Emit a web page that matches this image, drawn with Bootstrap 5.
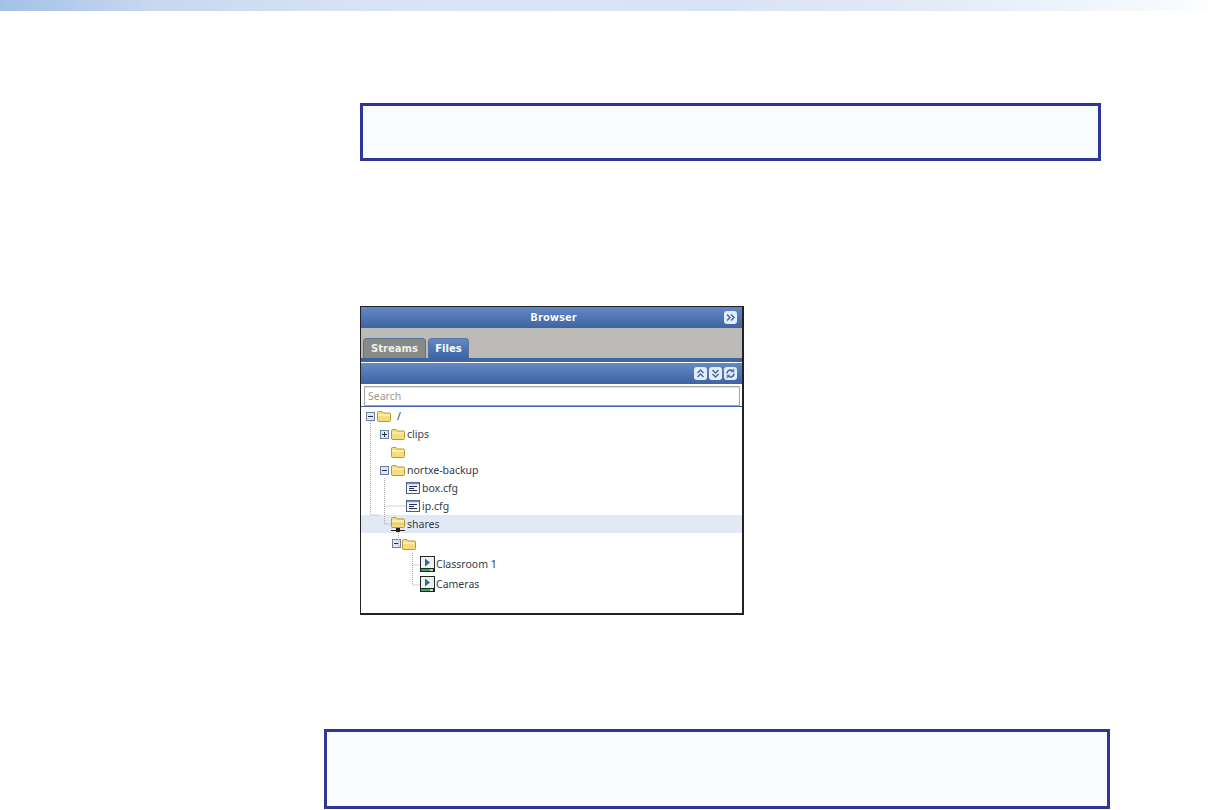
<!DOCTYPE html>
<html lang="en">
<head>
  <meta charset="UTF-8">
  <title>Browser panel</title>
  <meta name="viewport" content="width=device-width, initial-scale=1">
  <link href="https://cdn.jsdelivr.net/npm/bootstrap@5.3.0/dist/css/bootstrap.min.css" rel="stylesheet">
  <style>
    body {
      background: #fff;
      height: 810px;
      overflow: hidden;
      font-family: "Noto Sans", sans-serif;
    }
    .top-strip {
      height: 11px;
      background: linear-gradient(90deg, #a3c1e8 0%, #c6d7ef 12%, #d8e4f5 30%, #dae3f5 60%, #e4ecf8 78%, #f6fafe 95%, #fff 100%);
    }
    .note-box {
      background: #f8fcff;
      border: 3px solid #2e3797;
    }
    .note-one {
      width: 741px;
      height: 58px;
      margin: 92px 0 0 360px;
    }
    .note-two {
      width: 786px;
      height: 80px;
      margin: 114px 0 0 324px;
    }
    .browser-panel {
      position: relative;
      width: 384px;
      height: 309px;
      margin: 145px 0 0 360px;
      border: 1px solid #222;
      border-right-width: 2px;
      border-bottom-width: 2px;
    }
    .panel-head {
      height: 21px;
      background: linear-gradient(#6388c4, #3f64a4);
      color: #fff;
      font: bold 10px/18px "DejaVu Sans", sans-serif;
      padding-right: 5px;
    }
    .panel-title {
      padding-left: 22px;
      text-shadow: 0 0 1px #24457f;
    }
    .tab-strip {
      height: 34px;
      background: #bdbbb8;
      border-bottom: 4px solid #3f64a4;
      padding-left: 2px;
      gap: 2px;
    }
    .tab-item {
      height: 20px;
      border: 1px solid #55749f;
      border-bottom: 0;
      border-radius: 4px 4px 0 0;
      color: #fff;
      font: bold 10px/19px "DejaVu Sans", sans-serif;
      text-align: center;
    }
    .tab-streams {
      width: 63px;
      background: #888a88;
      color: #eef0ee;
    }
    .tab-files {
      width: 41px;
      background: linear-gradient(#6388c4, #3f64a4);
    }
    .tool-bar {
      height: 22px;
      border-top: 1px solid #fff;
      background: linear-gradient(#6388c4, #3f64a4);
      padding-right: 5px;
      gap: 2px;
    }
    .head-btn {
      width: 13px;
      height: 13px;
      border-radius: 3px;
      background: #e3eefa;
      display: block;
    }
    .search-row {
      height: 23px;
      padding: 2px 2px 0 3px;
      border-bottom: 1px solid #3f64a4;
    }
    .search-input {
      width: 100%;
      height: 20px;
      border: 1px solid #a9a9a4;
      box-shadow: inset 0 1px 1px #ddd;
      font: 10.5px/18px "Noto Sans", sans-serif;
      color: #9a9a94;
      padding-left: 3px;
    }
    .tree-list {
      position: relative;
      padding-top: 0;
      font: 10.5px/18px "Noto Sans", sans-serif;
      color: #333c4c;
    }
    .tree-row {
      height: 18px;
      gap: 2px;
    }
    .tree-row svg {
      flex: none;
    }
    .tree-tall {
      height: 20px;
      padding-top: 1px;
      gap: 1px;
    }
    .tree-selected {
      background: #e1e9f5;
    }
    .tree-lines {
      position: absolute;
      left: 0;
      top: 0;
    }
    .indent-0 { padding-left: 5px; }
    .indent-1 { padding-left: 19px; }
    .indent-2 { padding-left: 45px; }
    .indent-folder { padding-left: 30px; }
    .indent-sub { padding-left: 31px; }
    .indent-video { padding-left: 59px; }
  </style>
</head>
<body>

<svg width="0" height="0" class="d-block">
  <defs>
    <symbol id="folder" viewBox="0 0 14 12">
      <path d="M.5 10.5V2.5q0-1 1-1h3.5l1.5 1.5h6q1 0 1 1v6.500q0 1-1 1h-11q-1 0-1-1z" fill="#f5dc7c" stroke="#b79a35"/>
      <path d="M1 5h12" stroke="#fff3b8" stroke-width="1.500"/>
    </symbol>
    <symbol id="plus-box" viewBox="0 0 9 9">
      <rect x=".5" y=".5" width="8" height="8" fill="#dfe6f2" stroke="#6b7f9f"/>
      <path d="M2 4.500h5M4.500 2v5" stroke="#24304a"/>
    </symbol>
    <symbol id="minus-box" viewBox="0 0 9 9">
      <rect x=".5" y=".5" width="8" height="8" fill="#dfe6f2" stroke="#6b7f9f"/>
      <path d="M2 4.500h5" stroke="#24304a"/>
    </symbol>
    <symbol id="cfg-file" viewBox="0 0 14 12">
      <rect x=".5" y=".5" width="13" height="11" fill="#f4f6fa" stroke="#4b5f86"/>
      <path d="M1 1.500h12" stroke="#7d93bb" stroke-width="1.500"/>
      <path d="M3 4.500h8M3 6.500h5M3 8.500h8" stroke="#27334f"/>
    </symbol>
    <symbol id="video-file" viewBox="0 0 15 16">
      <rect width="15" height="16" fill="#1d2a28"/>
      <rect x="1" y="1" width="13" height="11" fill="#f1f2f0"/>
      <path d="M5 2.500l5 4-5 4z" fill="#2a6f8c"/>
      <rect x="1" y="13" width="9" height="2" fill="#3fa35a"/>
      <rect x="10" y="13" width="3" height="2" fill="#c9d6cc"/>
    </symbol>
  </defs>
</svg>

<div class="top-strip"></div>

<div class="note-box note-one"></div>

<div class="browser-panel">
  <div class="panel-head d-flex align-items-center justify-content-between">
    <span class="panel-title flex-grow-1 text-center">Browser</span>
    <svg class="head-btn" viewBox="0 0 13 13" fill="none" stroke="#3f64a4" stroke-width="1.400"><path d="M3 3.500l3 3-3 3M7 3.500l3 3-3 3"/></svg>
  </div>
  <div class="tab-strip d-flex align-items-end">
    <div class="tab-item tab-streams">Streams</div>
    <div class="tab-item tab-files">Files</div>
  </div>
  <div class="tool-bar d-flex align-items-center justify-content-end">
    <svg class="head-btn" viewBox="0 0 13 13" fill="none" stroke="#3f64a4" stroke-width="1.400"><path d="M3.500 6l3-3 3 3M3.500 10l3-3 3 3"/></svg>
    <svg class="head-btn" viewBox="0 0 13 13" fill="none" stroke="#3f64a4" stroke-width="1.400"><path d="M3.500 3l3 3 3-3M3.500 7l3 3 3-3"/></svg>
    <svg class="head-btn" viewBox="0 0 13 13" fill="none" stroke="#3f64a4" stroke-width="1.500"><path d="M3 6.500a3.500 3.500 0 0 1 6-2.500M10 6.500a3.500 3.500 0 0 1-6 2.500"/><path d="M9.800 1.800v3h-3M3.200 11.200v-3h3" stroke-width="1"/></svg>
  </div>
  <div class="search-row">
    <div class="search-input">Search</div>
  </div>
  <div class="tree-list">
    <svg class="tree-lines" width="60" height="180" fill="none" stroke="#a8a8a8" stroke-dasharray="1 1">
      <path d="M9.500 14V108h9M23.500 71v28h22M23.500 99v18h22M37.500 126v14M51.500 146v32M51.500 158h8M51.500 178h8"/>
    </svg>
    <div class="tree-row indent-0 d-flex align-items-center">
      <svg width="9" height="9"><use href="#minus-box"/></svg>
      <svg width="14" height="12"><use href="#folder"/></svg>
      <span class="ms-1">/</span>
    </div>
    <div class="tree-row indent-1 d-flex align-items-center">
      <svg width="9" height="9"><use href="#plus-box"/></svg>
      <svg width="14" height="12"><use href="#folder"/></svg>
      <span>clips</span>
    </div>
    <div class="tree-row indent-folder d-flex align-items-center">
      <svg width="14" height="12"><use href="#folder"/></svg>
    </div>
    <div class="tree-row indent-1 d-flex align-items-center">
      <svg width="9" height="9"><use href="#minus-box"/></svg>
      <svg width="14" height="12"><use href="#folder"/></svg>
      <span>nortxe-backup</span>
    </div>
    <div class="tree-row indent-2 d-flex align-items-center">
      <svg width="14" height="12"><use href="#cfg-file"/></svg>
      <span>box.cfg</span>
    </div>
    <div class="tree-row indent-2 d-flex align-items-center">
      <svg width="14" height="12"><use href="#cfg-file"/></svg>
      <span>ip.cfg</span>
    </div>
    <div class="tree-row tree-selected indent-folder d-flex align-items-center">
      <svg width="14" height="16" viewBox="0 0 14 16">
        <use href="#folder" width="14" height="12"/>
        <path d="M0 14.500h14" stroke="#222"/>
        <rect x="5" y="12" width="4" height="4" fill="#222"/>
      </svg>
      <span>shares</span>
    </div>
    <div class="tree-row tree-tall indent-sub d-flex align-items-center">
      <svg width="9" height="9"><use href="#minus-box"/></svg>
      <svg width="14" height="12"><use href="#folder"/></svg>
    </div>
    <div class="tree-row tree-tall indent-video d-flex align-items-center">
      <svg width="15" height="16"><use href="#video-file"/></svg>
      <span>Classroom 1</span>
    </div>
    <div class="tree-row tree-tall indent-video d-flex align-items-center">
      <svg width="15" height="16"><use href="#video-file"/></svg>
      <span>Cameras</span>
    </div>
  </div>
</div>

<div class="note-box note-two"></div>

<script src="https://cdn.jsdelivr.net/npm/bootstrap@5.3.0/dist/js/bootstrap.bundle.min.js"></script>
</body>
</html>
